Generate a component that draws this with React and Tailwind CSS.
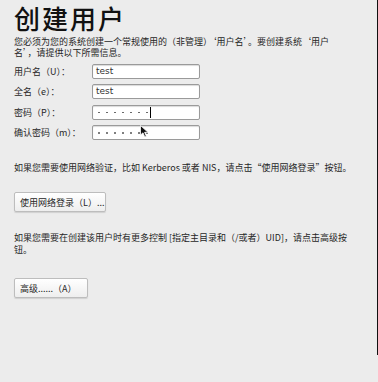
const FONT = { fontFamily: '"Noto Sans CJK SC", "DejaVu Sans", sans-serif' };
const MONO = { fontFamily: '"DejaVu Sans", "Noto Sans CJK SC", sans-serif' };

const Dots = () => (
  <div className="flex items-center gap-[6.5px] pl-[2px]">
    {[0, 1, 2, 3, 4, 5, 6].map((i) => (
      <span key={i} className="w-[1.5px] h-[1.5px] rounded-full bg-[#555]"></span>
    ))}
  </div>
);

const Field = ({ label, value, password, caret }) => (
  <div className="flex items-center h-[20.5px]">
    <span className="w-[78px] text-[9px] leading-[11px] text-[#262626]">{label}</span>
    <div className="relative w-[108px] h-[15px] bg-white border border-[#9a9a9a] rounded-[2px] shadow-[inset_0_1px_1px_rgba(0,0,0,0.15)] flex items-center px-[3px]" style={MONO}>
      {password ? <Dots /> : <span className="text-[9px] text-[#333] leading-none">{value}</span>}
      {caret && <span className="w-px h-[11px] bg-black ml-[2px]"></span>}
    </div>
  </div>
);

const Button = ({ children, className }) => (
  <button className={`h-[20px] whitespace-nowrap text-left px-[5px] text-[9px] leading-[11px] text-[#262626] bg-gradient-to-b from-white to-[#eeeeee] border border-[#bdbdbd] rounded-[2px] shadow-[0_1px_1px_rgba(0,0,0,0.12)] ${className}`}>
    {children}
  </button>
);

export default function App() {
  return (
    <div className="w-[378px] h-[382px] bg-[#ececec] relative overflow-hidden" style={FONT}>
      {/* right window edge */}
      <div className="absolute right-0 top-0 w-px h-[355px] bg-[#111]"></div>

      <div className="pl-[14px] pt-[1px] flex flex-col">
        <h1 className="text-[26px] leading-[33px] font-medium text-[#111] tracking-[2px]">创建用户</h1>
        <p className="mt-[2px] w-[330px] text-[9px] leading-[11px] text-[#262626]">
          您必须为您的系统创建一个常规使用的（非管理）‘用户名’。要创建系统‘用户名’，请提供以下所需信息。
        </p>

        <div className="mt-[3px] flex flex-col">
          <Field label="用户名（U）：" value="test" />
          <Field label="全名（e）：" value="test" />
          <Field label="密码（P）：" password caret />
          <Field label="确认密码（m）：" password />
        </div>

        <p className="mt-[19px] text-[9px] leading-[11px] text-[#262626] whitespace-nowrap">
          如果您需要使用网络验证，比如 Kerberos 或者 NIS，请点击“使用网络登录”按钮。
        </p>
        <div className="mt-[19px] flex">
          <Button className="w-[92px]">使用网络登录（L）...</Button>
        </div>

        <div className="mt-[20px] flex flex-col text-[9px] leading-[12px] text-[#262626] whitespace-nowrap">
          <span>如果您需要在创建该用户时有更多控制 [指定主目录和（/或者）UID]，请点击高级按</span>
          <span>钮。</span>
        </div>
        <div className="mt-[22px] flex">
          <Button className="w-[74px] h-[19px]">高级......（A）</Button>
        </div>
      </div>

      {/* mouse pointer */}
      <svg className="absolute left-[140px] top-[125px]" width="9" height="13" viewBox="0 0 9 13">
        <path d="M0.5 0.5 L0.5 10 L3 7.8 L4.8 12 L6.3 11.3 L4.6 7.3 L8 7.3 Z" fill="#111" stroke="#fff" strokeWidth="0.8" />
      </svg>
    </div>
  );
}
